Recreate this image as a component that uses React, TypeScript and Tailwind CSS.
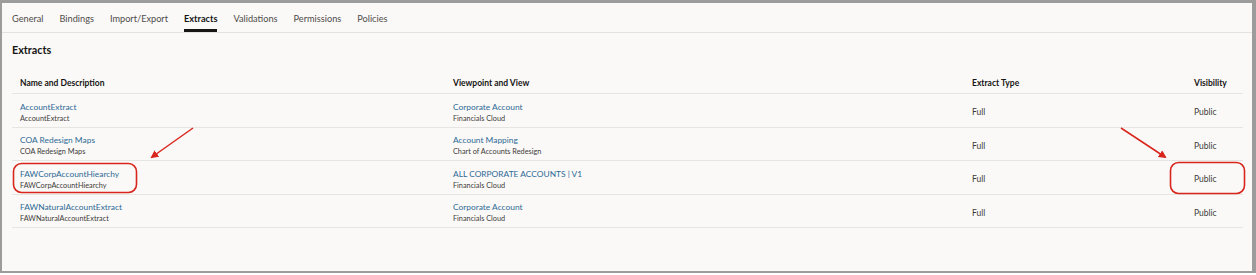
import React from "react";

const rows = [
  { name: "AccountExtract", desc: "AccountExtract", vp: "Corporate Account", view: "Financials Cloud" },
  { name: "COA Redesign Maps", desc: "COA Redesign Maps", vp: "Account Mapping", view: "Chart of Accounts Redesign" },
  { name: "FAWCorpAccountHiearchy", desc: "FAWCorpAccountHiearchy", vp: "ALL CORPORATE ACCOUNTS | V1", view: "Financials Cloud" },
  { name: "FAWNaturalAccountExtract", desc: "FAWNaturalAccountExtract", vp: "Corporate Account", view: "Financials Cloud" },
];

const tabs = ["General", "Bindings", "Import/Export", "Extracts", "Validations", "Permissions", "Policies"];

export default function App() {
  return (
    <div className="relative w-[1256px] h-[275px] bg-white" style={{ fontFamily: "Lato, 'Noto Sans', sans-serif" }}>
      <div className="h-[273px] border-t-[3px] border-l-[2px] border-r-[4px] border-b-[2px] border-[#9c9c9c] bg-[#faf9f8] text-[#161513]">
        <div className="flex gap-4 pl-[10px] h-[30px] border-b border-[#e4e2df]">
          {tabs.map((t) => (
            <div
              key={t}
              className={
                "flex items-center text-[9.2px] pt-[3px] " +
                (t === "Extracts" ? "font-bold text-[#161513] border-b-[3px] border-[#161513] pt-[6px]" : "text-[#4f4c49]")
              }
            >
              {t}
            </div>
          ))}
        </div>
        <div className="pl-[10px] pr-[9px]">
          <div className="h-[34px] flex items-center text-[10.8px] font-bold">Extracts</div>
          <div className="grid grid-cols-[433px_519px_222px_1fr] h-[27px] items-center text-[8.5px] font-bold border-b border-[#e7e5e2] pt-[7px]">
            <div className="px-2">Name and Description</div>
            <div className="px-2">Viewpoint and View</div>
            <div className="px-2">Extract Type</div>
            <div className="px-2">Visibility</div>
          </div>
          {rows.map((r) => (
            <div key={r.name} className="grid grid-cols-[433px_519px_222px_1fr] h-[33.5px] items-center border-b border-[#e7e5e2] pt-[5px]">
              <div className="px-2 flex flex-col leading-[11px]">
                <span className="text-[8.4px] text-[#2e6a95]">{r.name}</span>
                <span className="text-[7.3px] text-[#3d3b39]">{r.desc}</span>
              </div>
              <div className="px-2 flex flex-col leading-[11px]">
                <span className="text-[8.4px] text-[#2e6a95]">{r.vp}</span>
                <span className="text-[7.3px] text-[#3d3b39]">{r.view}</span>
              </div>
              <div className="px-2 text-[8.5px] text-[#3d3b39]">Full</div>
              <div className="px-2 text-[8.5px] text-[#3d3b39]">Public</div>
            </div>
          ))}
        </div>
      </div>
      <svg className="absolute inset-0 pointer-events-none" width="1256" height="275">
        <defs>
          <marker id="ah" markerWidth="8" markerHeight="8" refX="6" refY="4" orient="auto" markerUnits="userSpaceOnUse">
            <path d="M0,0 L8,4 L0,8 Z" fill="#d8261c" />
          </marker>
        </defs>
        <rect x="13.5" y="163.5" width="123" height="29" rx="8" fill="none" stroke="#d8261c" strokeWidth="1.6" />
        <rect x="1170.5" y="162.5" width="74" height="31" rx="8" fill="none" stroke="#d8261c" strokeWidth="1.6" />
        <line x1="193" y1="128" x2="152" y2="157" stroke="#d8261c" strokeWidth="1.5" markerEnd="url(#ah)" />
        <line x1="1121" y1="128" x2="1165" y2="157" stroke="#d8261c" strokeWidth="1.5" markerEnd="url(#ah)" />
      </svg>
    </div>
  );
}
